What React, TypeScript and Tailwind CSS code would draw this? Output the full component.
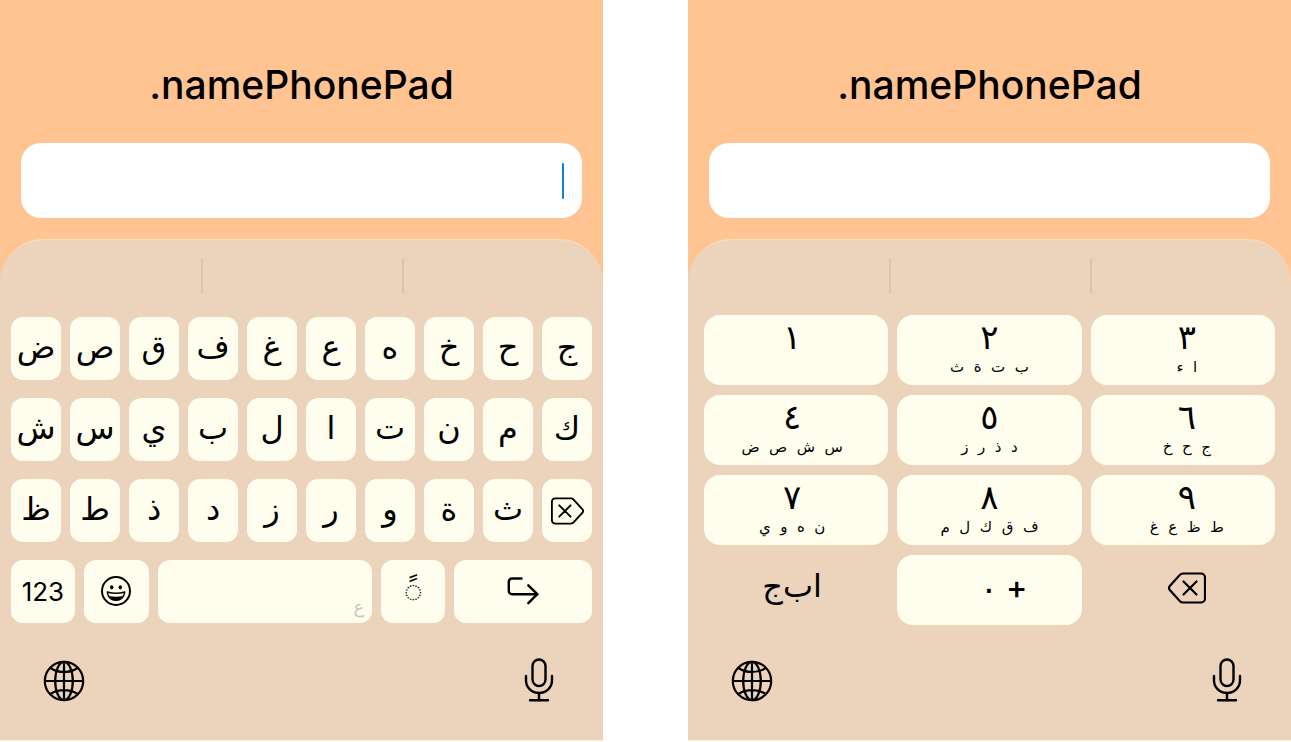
import { useId } from "react"
import type { ReactNode } from "react"
import { clsx } from "clsx"

const letterRows = [
  ["ض", "ص", "ق", "ف", "غ", "ع", "ه", "خ", "ح", "ج"],
  ["ش", "س", "ي", "ب", "ل", "ا", "ت", "ن", "م", "ك"],
  ["ظ", "ط", "ذ", "د", "ز", "ر", "و", "ة", "ث"],
]

const padKeys = [
  { digit: "١", letters: "" },
  { digit: "٢", letters: "ب ت ة ث" },
  { digit: "٣", letters: "ا ء" },
  { digit: "٤", letters: "س ش ص ض" },
  { digit: "٥", letters: "د ذ ر ز" },
  { digit: "٦", letters: "ج ح خ" },
  { digit: "٧", letters: "ن ه و ي" },
  { digit: "٨", letters: "ف ق ك ل م" },
  { digit: "٩", letters: "ط ظ ع غ" },
]

function DeleteIcon({ className }: { className: string }) {
  return (
    <svg viewBox="0 0 38 32" className={className} fill="none" stroke="currentColor" strokeWidth="2.2" strokeLinecap="round" strokeLinejoin="round">
      <path d="M15 1.500H33a4 4 0 0 1 4 4V26.500a4 4 0 0 1-4 4H15a4 4 0 0 1-3-1.300L2 18.200a3.200 3.200 0 0 1 0-4.400L12 2.800a4 4 0 0 1 3-1.300Z" />
      <path d="M15.500 9.500l13 13M28.500 9.500L15.500 22.500" />
    </svg>
  )
}

function EmojiIcon() {
  return (
    <svg viewBox="0 0 30 30" className="size-[30px]" fill="none" stroke="currentColor" strokeWidth="2">
      <circle cx="15" cy="15" r="14" />
      <ellipse cx="10.700" cy="11.300" rx="1.700" ry="2.100" fill="currentColor" stroke="none" />
      <ellipse cx="19.300" cy="11.300" rx="1.700" ry="2.100" fill="currentColor" stroke="none" />
      <path d="M6.300 16c5 1.500 12.400 1.500 17.400 0-.5 5.200-4 8.300-8.700 8.300S6.800 21.200 6.300 16Z" strokeWidth="1.500" strokeLinejoin="round" />
      <path d="M7.500 19.800c4.500 1.300 10.500 1.300 15 0-1.500 3.200-4.200 4.800-7.500 4.800s-6-1.600-7.500-4.800Z" fill="currentColor" stroke="none" />
    </svg>
  )
}

function ReturnIcon() {
  return (
    <svg viewBox="0 0 32 28" className="h-7 w-8" fill="none" stroke="currentColor" strokeWidth="2.400" strokeLinecap="round" strokeLinejoin="round">
      <path d="M14.500 1.500H5A3.200 3.200 0 0 0 1.800 4.700V14A3.200 3.200 0 0 0 5 17.200H30.300" />
      <path d="M21.300 8.300l9 8.900-9 9" />
    </svg>
  )
}

function GlobeIcon() {
  return (
    <svg viewBox="0 0 42 42" className="size-[42px]" fill="none" stroke="currentColor" strokeWidth="2.200">
      <circle cx="21" cy="21" r="19.200" />
      <ellipse cx="21" cy="21" rx="8.800" ry="19.200" />
      <path d="M21 1.800V40.200M1.800 21H40.200M7.500 8c7.500 5.300 19.500 5.300 27 0M7.500 34c7.500-5.300 19.500-5.300 27 0" />
    </svg>
  )
}

function MicIcon() {
  return (
    <svg viewBox="0 0 30 44" className="h-11 w-[30px]" fill="none" stroke="currentColor" strokeWidth="2.400" strokeLinecap="round">
      <rect x="8.500" y="1.500" width="13" height="26.500" rx="6.500" />
      <path d="M2 18v4.500a13 12.500 0 0 0 26 0V18M15 35v7.500M6 42.300H24" />
    </svg>
  )
}

function Key({ label, className, children }: { label?: string; className?: string; children?: ReactNode }) {
  return (
    <button
      type="button"
      aria-label={label}
      className={clsx("flex min-w-0 justify-center bg-[#fffeee]", className)}
    >
      {children}
    </button>
  )
}

function LetterKeyboard() {
  return (
    <div className="mt-[23px] mb-[35px] flex flex-col gap-[18px] px-[11px]">
      {letterRows.map((row, index) => (
        <div key={index} className="grid grid-cols-10 gap-[9px]">
          {row.map((letter) => (
            <Key key={letter} className="h-[63px] items-center rounded-xl pb-1 font-['DejaVu_Sans',sans-serif] text-[32px] leading-none">
              {letter}
            </Key>
          ))}
          {index === 2 && (
            <Key label="Delete" className="h-[63px] items-center rounded-xl">
              <DeleteIcon className="h-7 w-[33px] -scale-x-100" />
            </Key>
          )}
        </div>
      ))}
      <div className="grid h-[63px] grid-cols-[64fr_65fr_215fr_64fr_138fr] gap-[9px]">
        <Key className="items-center rounded-xl text-[26px]">123</Key>
        <Key label="Emoji" className="items-center rounded-xl pb-0.5">
          <EmojiIcon />
        </Key>
        <Key className="items-end rounded-xl px-2 pb-1">
          <span className="ml-auto font-['DejaVu_Sans',sans-serif] text-lg leading-6 text-[#c9c8bb]">ع</span>
        </Key>
        <Key className="items-center rounded-xl font-['Noto_Kufi_Arabic','DejaVu_Sans',sans-serif] text-[32px] leading-none">
          ◌ً
        </Key>
        <Key label="Return" className="items-center rounded-xl pb-0.5">
          <ReturnIcon />
        </Key>
      </div>
    </div>
  )
}

function PhoneKeyboard() {
  return (
    <div className="mt-[21px] mb-[33px] grid grid-cols-3 gap-x-[9px] gap-y-2.5 px-4 font-['DejaVu_Sans',sans-serif] [&>*:nth-child(3n)]:pl-2 [&>*:nth-child(3n+1)]:pr-2">
      {padKeys.map(({ digit, letters }) => (
        <Key key={digit} className="h-[70px] flex-col items-center justify-start rounded-2xl pt-1">
          <span className="text-[34px] leading-9">{digit}</span>
          <span dir="rtl" className="text-[15px] leading-6 whitespace-pre">
            {letters.split(" ").join("  ")}
          </span>
        </Key>
      ))}
      <button type="button" className="h-[70px] pb-2 text-[32px] leading-none">
        ا&zwnj;ب&zwnj;ج
      </button>
      <Key className="h-[70px] items-center gap-2 rounded-2xl pl-7 pb-1 text-[34px] leading-none">
        <span>٠</span>
        <span className="font-[Inter,sans-serif] text-[32px] font-medium">+</span>
      </Key>
      <button type="button" aria-label="Delete" className="flex h-[70px] items-center justify-center pb-1">
        <DeleteIcon className="h-8 w-[38px]" />
      </button>
    </div>
  )
}

function Screen({ focused = false, children }: { focused?: boolean; children: ReactNode }) {
  const id = useId()
  return (
    <section className="flex min-w-0 flex-1 flex-col border-b border-[#fbe8d3] bg-[#ffc492]">
      <label htmlFor={id} className="mt-[60px] text-center text-[39px] leading-[50px] font-medium">
        .namePhonePad
      </label>
      <div className="mx-[21px] mt-[33px] flex h-[75px] items-center rounded-[20px] bg-white px-[18px]">
        <input id={id} type="text" dir="rtl" className="min-w-0 flex-1 bg-transparent text-3xl outline-none" />
        {focused && <span className="h-9 w-[2px] rounded-full bg-[#0a84e0]" />}
      </div>
      <div className="mt-[21px] flex flex-col rounded-t-[44px] border-t border-[#f7dfc0] bg-[#ecd3bc]">
        {/* Suggestion bar */}
        <div className="mt-[18px] grid h-9 grid-cols-3">
          <span />
          <span className="border-l-2 border-[#dfc3ac]" />
          <span className="border-l-2 border-[#dfc3ac]" />
        </div>
        {children}
        <div className="mb-[38px] flex items-end justify-between pr-[49px] pl-[43px]">
          <button type="button" aria-label="Next keyboard">
            <GlobeIcon />
          </button>
          <button type="button" aria-label="Dictate">
            <MicIcon />
          </button>
        </div>
      </div>
    </section>
  )
}

export default function App() {
  return (
    <main className="flex items-start gap-[85px] bg-white font-[Inter,sans-serif] text-black">
      <Screen focused>
        <LetterKeyboard />
      </Screen>
      <Screen>
        <PhoneKeyboard />
      </Screen>
    </main>
  )
}
